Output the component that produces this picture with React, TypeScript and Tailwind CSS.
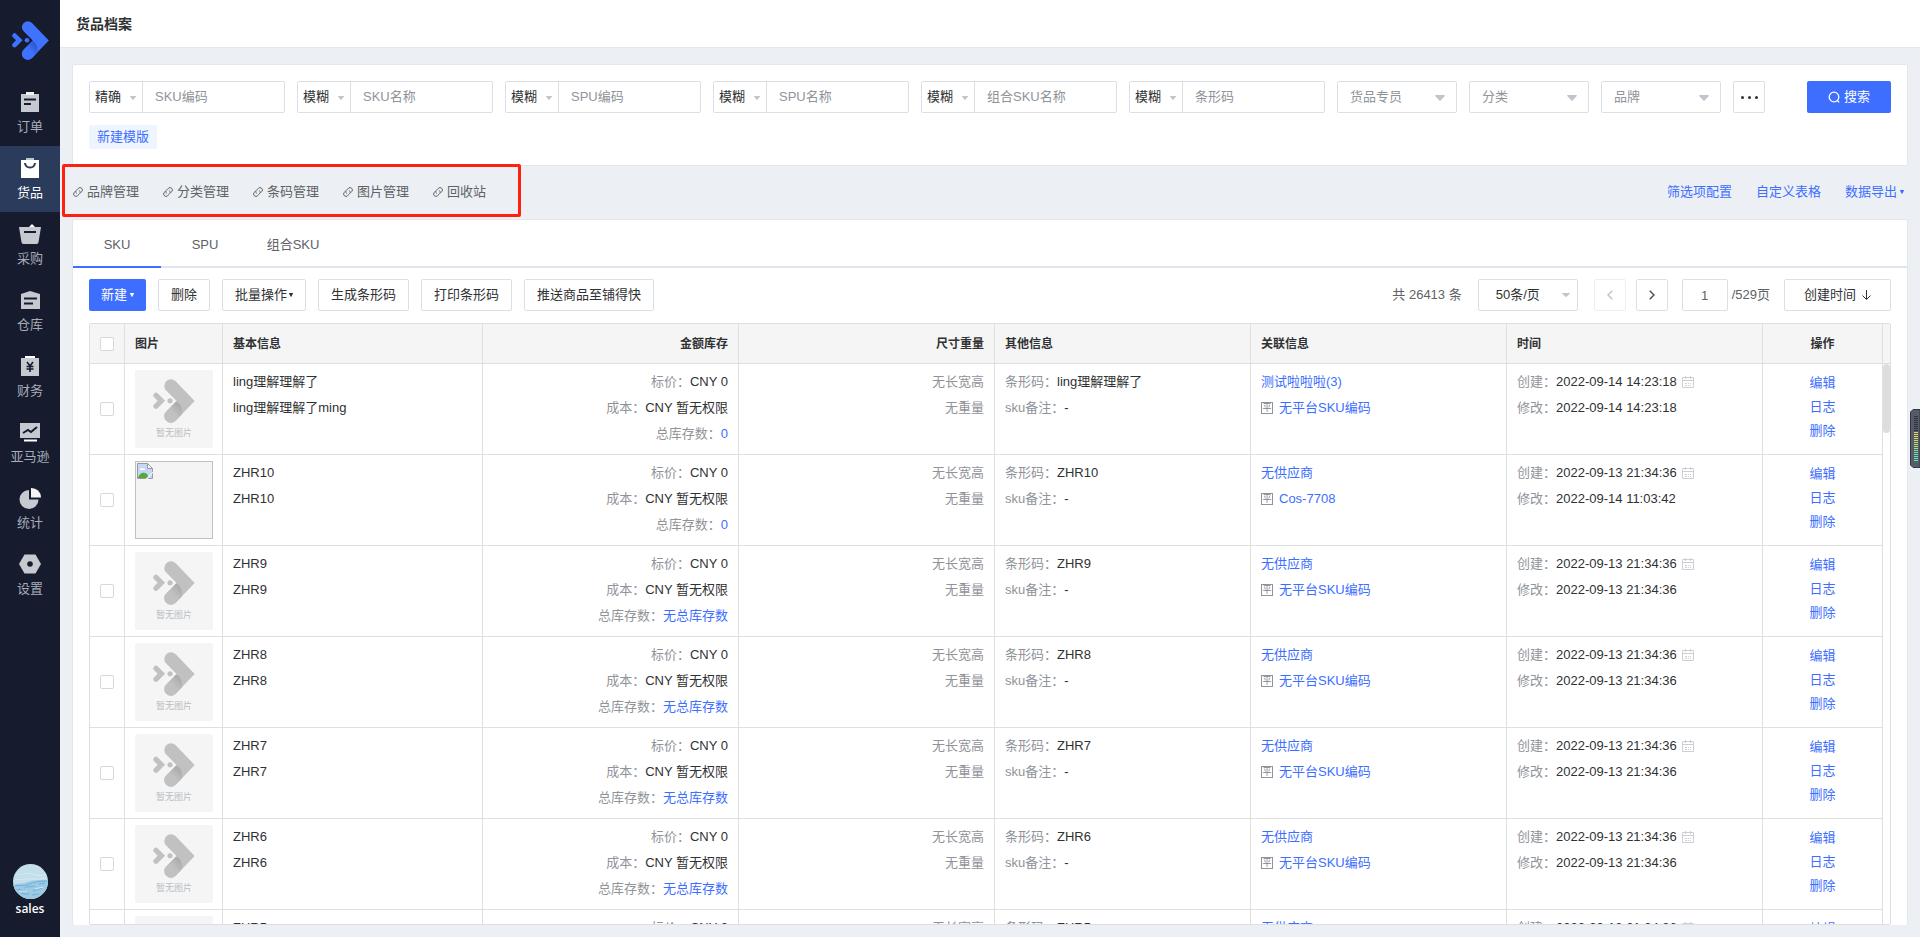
import { useId } from "react";
import type { ReactNode } from "react";

const FONT =
  "font-['Liberation_Sans','Noto_Sans_CJK_SC',sans-serif]";

/* ---------- icons ---------- */

const Caret = ({ className }: { className?: string }) => (
  <svg viewBox="0 0 8 5" preserveAspectRatio="none" fill="currentColor" className={className} aria-hidden>
    <path d="M0.6 0h6.8c.5 0 .7.5.4.8L4.5 4.6a.7.7 0 0 1-1 0L.2.8C-.1.5.1 0 .6 0z" />
  </svg>
);

const Logo = ({
  color,
  shade,
  className,
}: {
  color: string;
  shade: string;
  className?: string;
}) => {
  const id = useId();
  return (
    <svg viewBox="0 0 37 39" className={className} aria-hidden>
      <defs>
        <linearGradient id={id} x1="25" y1="23" x2="18" y2="30" gradientUnits="userSpaceOnUse">
          <stop offset="0" stopColor={shade} />
          <stop offset="1" stopColor={color} />
        </linearGradient>
      </defs>
      <path
        fill={color}
        d="M20 2 36.800 19.500 20 37A5.900 5.900 0 0 1 11.600 28.700L20.800 19.500 11.600 10.300A5.900 5.900 0 0 1 20 2z"
      />
      <path
        fill={`url(#${id})`}
        d="M11.600 28.700 20.300 20C24.500 22 26.400 26 25.200 31.600L20 37A5.900 5.900 0 0 1 11.600 28.700z"
      />
      <circle cx="15" cy="19.3" r="2.3" fill={color} />
      <path
        fill={color}
        d="M4.2 12.9 10.6 19.3 4.2 25.7A2.3 2.3 0 0 1 .9 22.4L4 19.3 .9 16.2A2.3 2.3 0 0 1 4.2 12.9z"
      />
    </svg>
  );
};

const LinkIcon = () => (
  <svg
    viewBox="0 0 10 10"
    className="size-[10px]"
    fill="none"
    stroke="currentColor"
    strokeLinecap="round"
    aria-hidden
  >
    <path d="M3.400 6.200C2.500 5 2.700 4 3.500 3.200L5.400 1.300a2.300 2.300 0 0 1 3.300 3.300L7.600 5.700" />
    <path d="M6.600 3.800C7.500 5 7.300 6 6.500 6.800L4.600 8.700a2.300 2.300 0 0 1-3.300-3.300L2.400 4.300" />
  </svg>
);

const CalendarIcon = () => (
  <svg viewBox="0 0 12 12" className="size-3 text-[#ccd0d4]" fill="none" stroke="currentColor" aria-hidden>
    <path d="M.5 1.500h11v10H.5zM.5 4.500h11M3.500 0v3M8.500 0v3" />
    <path d="M3 7.500h2m1 0h1m1 0h1M3 9.500h2m1 0h1m1 0h1" />
  </svg>
);

const BrokenImageIcon = () => (
  <svg viewBox="0 0 16 16" className="size-4" aria-hidden>
    <path d="M.5.5h10l5 5v10H.5z" fill="#c6d8f5" stroke="#9a9a9a" />
    <path d="M3 6.500c0-1.600 2.400-2.200 3-.8 1.500-.4 2 .4 2 1.300H3z" fill="#fff" />
    <path d="M1 15c1-4 4-6 7-5 2 .6 3 2 3.500 5z" fill="#56a83a" />
    <path d="M8.500 16 16 8.500V10l-5.500 6z" fill="#f4f4f4" />
    <path d="M10.500.5v5h5z" fill="#fff" stroke="#9a9a9a" />
  </svg>
);

const OrderIcon = () => (
  <>
    <path d="M1 2h18v18H1z" />
    <path d="M6 0h8v3H6z" fill="#f1f2f4" />
    <path d="M4 7.500h12M4 12h7" stroke="#161b2e" strokeWidth="2" />
  </>
);

const GoodsIcon = () => (
  <>
    <path d="M1 2h18v18H1z" fill="#fff" />
    <path d="M6 0h8v2H6z" fill="#c3c6cd" />
    <path d="M5 5c.6 6 9.400 6 10 0" fill="none" stroke="#2b3b5b" strokeWidth="2" />
  </>
);

const PurchaseIcon = () => (
  <>
    <path d="M8 4 12 0l4 4z" fill="#fff" />
    <path d="M-1 3h22l-2.500 15.200a2 2 0 0 1-2 1.800h-13a2 2 0 0 1-2-1.800z" />
    <path d="M4 8h12" stroke="#161b2e" strokeWidth="2" />
  </>
);

const WarehouseIcon = () => (
  <>
    <path d="M1 4 10 1l10 3v15H1z" />
    <path d="M4 8.500h13M4 13.500h9" stroke="#161b2e" strokeWidth="2" />
  </>
);

const FinanceIcon = () => (
  <>
    <path d="M1 2h18v18H1z" />
    <path d="M5 0h10v2H5z" fill="#fff" />
    <path
      d="M7 6l3 4 3-4M6.500 10.500h7M6.500 13h7M10 10v6"
      fill="none"
      stroke="#161b2e"
      strokeWidth="1.600"
    />
  </>
);

const AmazonIcon = () => (
  <>
    <path d="M0 1h20v15H0z" />
    <path d="M4 18.500h13" stroke="#fff" strokeWidth="2" />
    <path d="M3 11l5-3 3 2 6-5" fill="none" stroke="#161b2e" strokeWidth="2" />
  </>
);

const StatsIcon = () => (
  <>
    <path d="M9 2a9.500 9.500 0 1 0 9.500 9.500H9z" />
    <path d="M11 0a9.500 9.500 0 0 1 10 9.500H11z" fill="#f4f4f4" />
  </>
);

const SettingsIcon = () => (
  <>
    <path d="M4.500.5h11L21 10l-5.500 9.500h-11L-1 10z" />
    <circle cx="10" cy="10" r="2.800" fill="#161b2e" />
  </>
);

/* ---------- data ---------- */

const menu: { label: string; icon: ReactNode; active?: boolean }[] = [
  { label: "订单", icon: <OrderIcon /> },
  { label: "货品", icon: <GoodsIcon />, active: true },
  { label: "采购", icon: <PurchaseIcon /> },
  { label: "仓库", icon: <WarehouseIcon /> },
  { label: "财务", icon: <FinanceIcon /> },
  { label: "亚马逊", icon: <AmazonIcon /> },
  { label: "统计", icon: <StatsIcon /> },
  { label: "设置", icon: <SettingsIcon /> },
];

const filters = [
  { mode: "精确", label: "SKU编码" },
  { mode: "模糊", label: "SKU名称" },
  { mode: "模糊", label: "SPU编码" },
  { mode: "模糊", label: "SPU名称" },
  { mode: "模糊", label: "组合SKU名称" },
  { mode: "模糊", label: "条形码" },
];

const links = ["品牌管理", "分类管理", "条码管理", "图片管理", "回收站"];

type Row = {
  sku: string;
  name: string;
  barcode: string;
  stock: string;
  supplier: string;
  platform: string;
  created: string;
  updated: string;
  broken?: boolean;
};

const plain = (sku: string): Row => ({
  sku,
  name: sku,
  barcode: sku,
  stock: "无总库存数",
  supplier: "无供应商",
  platform: "无平台SKU编码",
  created: "2022-09-13 21:34:36",
  updated: "2022-09-13 21:34:36",
});

const rows: Row[] = [
  {
    sku: "ling理解理解了",
    name: "ling理解理解了ming",
    barcode: "ling理解理解了",
    stock: "0",
    supplier: "测试啦啦啦(3)",
    platform: "无平台SKU编码",
    created: "2022-09-14 14:23:18",
    updated: "2022-09-14 14:23:18",
  },
  {
    ...plain("ZHR10"),
    stock: "0",
    platform: "Cos-7708",
    updated: "2022-09-14 11:03:42",
    broken: true,
  },
  plain("ZHR9"),
  plain("ZHR8"),
  plain("ZHR7"),
  plain("ZHR6"),
  plain("ZHR5"),
];

/* ---------- small parts ---------- */

const Button = ({ children }: { children: ReactNode }) => (
  <button
    type="button"
    className="flex h-8 items-center gap-0.5 rounded-xs border border-[#dcdfe6] bg-white px-3 whitespace-nowrap text-[#303133]"
  >
    {children}
  </button>
);

const Checkbox = ({ label }: { label: string }) => (
  <input
    type="checkbox"
    aria-label={label}
    className="block size-[14px] appearance-none rounded-xs border border-[#d5d8de] bg-white checked:bg-[#3d6eff]"
  />
);

const Label = ({ children }: { children: ReactNode }) => (
  <span className="text-[#909399]">{children}</span>
);

const Blue = ({ children }: { children: ReactNode }) => (
  <a href="#" className="text-[#3d6eff]">
    {children}
  </a>
);

const Th = ({ children, className = "" }: { children?: ReactNode; className?: string }) => (
  <th
    className={`border-r border-b border-[#dfdfdf] bg-[#f5f5f5] px-[10px] text-xs font-bold text-[#303133] ${className}`}
  >
    {children}
  </th>
);

const Td = ({ children, className = "" }: { children?: ReactNode; className?: string }) => (
  <td className={`border-r border-b border-[#dfdfdf] px-[10px] pt-[5px] align-top leading-[26px] ${className}`}>
    {children}
  </td>
);

/* ---------- sections ---------- */

const Sidebar = () => (
  <aside className="flex w-[60px] shrink-0 flex-col bg-[#161b2e]">
    <div className="flex h-20 items-center justify-center">
      <Logo color="#3f73ff" shade="#2c50c4" className="h-[39px] w-[37px]" />
    </div>
    <nav>
      {menu.map(({ label, icon, active }) => (
        <a
          key={label}
          href="#"
          className={
            active
              ? "flex h-[66px] flex-col items-center bg-[#2b3b5b] pt-3 text-white"
              : "flex h-[66px] flex-col items-center pt-3 text-[#a6acb9]"
          }
        >
          <svg viewBox="0 0 20 20" className="size-5 overflow-visible" fill="#c6c9d0" aria-hidden>
            {icon}
          </svg>
          <span className="mt-[3px] text-[13px] leading-6">{label}</span>
        </a>
      ))}
    </nav>
    <div className="mt-auto flex flex-col items-center pb-[18px]">
      <svg viewBox="0 0 35 35" className="size-[35px]" role="img" aria-label="avatar">
        <defs>
          <clipPath id="avatar">
            <circle cx="17.5" cy="17.5" r="17.5" />
          </clipPath>
        </defs>
        <g clipPath="url(#avatar)">
          <path d="M0 0h35v35H0z" fill="#c3dfea" />
          <path d="M0 21c6-2 10-1 15-3s12-2 20-2v19H0z" fill="#9ccae4" />
          <path
            d="M2 22c5-2 8 1 12-1s10-4 20-4M4 26c3-2 5 2 8 0M16 23l6-1M20 27c3-2 6-1 9-3M8 30c3-1 5 1 8 0M19 31l7-1M12 24l4-2M26 20l6-1"
            fill="none"
            stroke="#6fafda"
          />
          <path
            d="M3 10c6 2 10-2 16 0s8 2 14 0M2 15c8 2 12-1 18 0s8-1 13-1M6 28c3-2 5 0 8-1M22 25l8-2"
            fill="none"
            stroke="#d4e9f0"
          />
        </g>
      </svg>
      <span className="font-['Open_Sans',sans-serif] text-xs leading-5 font-semibold text-white">sales</span>
    </div>
  </aside>
);

const FilterPanel = () => (
  <form className="flex flex-col items-start gap-3 rounded-xs border border-[#e4e7eb] bg-white p-4">
    <div className="flex w-full items-start gap-3">
      {filters.map(({ mode, label }) => (
        <div key={label} className="flex h-8 w-[196px] min-w-0 rounded-xs border border-[#dcdfe6]">
          <div className="relative w-[53px] shrink-0 border-r border-[#dcdfe6]">
            <select
              aria-label={`${label}匹配方式`}
              className="h-full w-full appearance-none pl-[5px] text-[#303133]"
            >
              <option>{mode}</option>
            </select>
            <Caret className="pointer-events-none absolute top-[14px] right-[6px] h-1 w-[6px] text-[#c0c4cc]" />
          </div>
          <input
            type="text"
            aria-label={label}
            placeholder={label}
            className="min-w-0 flex-1 px-3 placeholder:text-[#909399]"
          />
        </div>
      ))}
      {["货品专员", "分类", "品牌"].map((label) => (
        <div key={label} className="relative h-8 w-[120px] min-w-0">
          <select
            aria-label={label}
            className="h-full w-full appearance-none rounded-xs border border-[#dcdfe6] pl-3 text-[#909399]"
          >
            <option>{label}</option>
          </select>
          <Caret className="pointer-events-none absolute top-[14px] right-3 h-[6px] w-[10px] text-[#c0c4cc]" />
        </div>
      ))}
      <button
        type="button"
        aria-label="更多筛选"
        className="flex size-8 shrink-0 items-center justify-center gap-1 rounded-xs border border-[#dcdfe6]"
      >
        <i className="size-[3px] rounded-full bg-[#303133]" />
        <i className="size-[3px] rounded-full bg-[#303133]" />
        <i className="size-[3px] rounded-full bg-[#303133]" />
      </button>
      <button
        type="button"
        className="ml-auto flex h-8 w-[84px] shrink-0 items-center justify-center gap-1 rounded-xs bg-[#3d6eff] text-white"
      >
        <svg viewBox="0 0 12 12" className="size-3" fill="none" stroke="currentColor" strokeWidth="1.300" aria-hidden>
          <circle cx="6" cy="6" r="4.800" />
          <path d="M9 9.200 11.200 11.400" />
        </svg>
        搜索
      </button>
    </div>
    <button type="button" className="h-6 rounded-xs bg-[#eef5ff] px-2 leading-6 text-[#3d6eff]">
      新建模版
    </button>
  </form>
);

const LinkBar = () => (
  <div className="relative flex h-[53px] items-center justify-between pb-0.5">
    <div className="flex gap-6 pl-px">
      {links.map((label) => (
        <a key={label} href="#" className="flex items-center gap-1 text-[#606266]">
          <LinkIcon />
          {label}
        </a>
      ))}
    </div>
    <div className="flex gap-6 pr-1 text-[#3d6eff]">
      <a href="#">筛选项配置</a>
      <a href="#">自定义表格</a>
      <a href="#" className="flex items-center gap-[3px]">
        数据导出
        <Caret className="size-1" />
      </a>
    </div>
    {/* highlight frame */}
    <div className="pointer-events-none absolute -top-[2px] -left-[10px] h-[53px] w-[459px] rounded-xs border-3 border-[#ff2010]" />
  </div>
);

const Toolbar = () => (
  <div className="flex items-center justify-between px-4 pt-[11px] pb-3">
    <div className="flex gap-3">
      <button
        type="button"
        className="flex h-8 items-center gap-[3px] rounded-xs bg-[#3d6eff] px-3 text-white"
      >
        新建
        <Caret className="size-1" />
      </button>
      <Button>删除</Button>
      <Button>
        批量操作
        <Caret className="size-1" />
      </Button>
      <Button>生成条形码</Button>
      <Button>打印条形码</Button>
      <Button>推送商品至铺得快</Button>
    </div>
    <div className="flex items-center text-[#606266]">
      <span>共 26413 条</span>
      <div className="relative ml-4 h-8 w-[100px]">
        <select
          aria-label="每页条数"
          className="h-full w-full appearance-none rounded-xs border border-[#dcdfe6] pl-[17px] text-[#303133]"
        >
          <option>50条/页</option>
        </select>
        <Caret className="pointer-events-none absolute top-[14px] right-2 h-1 w-2 text-[#c0c4cc]" />
      </div>
      <button
        type="button"
        aria-label="上一页"
        disabled
        className="ml-4 flex size-8 items-center justify-center rounded-xs border border-[#ebeef5] text-[#c0c4cc]"
      >
        <svg viewBox="0 0 6 10" className="h-[10px] w-[6px]" fill="none" stroke="currentColor" strokeWidth="1.500">
          <path d="M5.300.8 1 5l4.300 4.200" />
        </svg>
      </button>
      <button
        type="button"
        aria-label="下一页"
        className="ml-[10px] flex size-8 items-center justify-center rounded-xs border border-[#dcdfe6] text-[#505256]"
      >
        <svg viewBox="0 0 6 10" className="h-[10px] w-[6px]" fill="none" stroke="currentColor" strokeWidth="1.500">
          <path d="M.7.8 5 5 .7 9.200" />
        </svg>
      </button>
      <input
        type="text"
        aria-label="页码"
        defaultValue="1"
        className="mr-1 ml-[14px] h-8 w-[46px] rounded-xs border border-[#dcdfe6] text-center"
      />
      <span>/529页</span>
      <button
        type="button"
        className="ml-[14px] flex h-8 w-[107px] items-center justify-center gap-[6px] rounded-xs border border-[#dcdfe6] text-[#303133]"
      >
        创建时间
        <svg viewBox="0 0 9 10" className="h-[10px] w-[9px]" fill="none" stroke="currentColor" aria-hidden>
          <path d="M4.500 0v9.200M.5 5.500l4 4 4-4" />
        </svg>
      </button>
    </div>
  </div>
);

const GoodsTable = () => (
  <div className="mx-4 flex min-h-0 flex-1 overflow-hidden rounded-xs border border-[#dfdfdf]">
    <div className="min-w-0 flex-1 overflow-hidden">
      <table className="w-full table-fixed border-separate border-spacing-0">
        <colgroup>
          <col className="w-[35px]" />
          <col className="w-[98px]" />
          <col className="w-[260px]" />
          <col />
          <col />
          <col />
          <col />
          <col />
          <col className="w-[120px]" />
        </colgroup>
        <thead>
          <tr className="h-10 text-left">
            <Th>
              <Checkbox label="全选" />
            </Th>
            <Th>图片</Th>
            <Th>基本信息</Th>
            <Th className="text-right">金额库存</Th>
            <Th className="text-right">尺寸重量</Th>
            <Th>其他信息</Th>
            <Th>关联信息</Th>
            <Th>时间</Th>
            <Th className="text-center">操作</Th>
          </tr>
        </thead>
        <tbody className="text-[#303133]">
          {rows.map((row) => (
            <tr key={row.sku} className="h-[91px]">
              <td className="border-r border-b border-[#dfdfdf] px-[10px] align-middle">
                <Checkbox label={row.sku} />
              </td>
              <td className="border-r border-b border-[#dfdfdf] px-[10px]">
                {row.broken ? (
                  <div className="size-[78px] border border-[#c0c0c0] bg-[#f4f4f4] p-px">
                    <BrokenImageIcon />
                  </div>
                ) : (
                  <div className="flex size-[78px] flex-col items-center gap-1 rounded-xs bg-[#f5f5f5] pt-[9px] text-[9px] leading-3 text-[#b9bdc3]">
                    <Logo color="#c1c1c1" shade="#a8a8a8" className="h-[44px] w-[42px]" />
                    暂无图片
                  </div>
                )}
              </td>
              <Td>
                <p>{row.sku}</p>
                <p>{row.name}</p>
              </Td>
              <Td className="text-right">
                <p>
                  <Label>标价：</Label>CNY 0
                </p>
                <p>
                  <Label>成本：</Label>CNY 暂无权限
                </p>
                <p>
                  <Label>总库存数：</Label>
                  <Blue>{row.stock}</Blue>
                </p>
              </Td>
              <Td className="text-right text-[#909399]">
                <p>无长宽高</p>
                <p>无重量</p>
              </Td>
              <Td>
                <p>
                  <Label>条形码：</Label>
                  {row.barcode}
                </p>
                <p>
                  <Label>sku备注：</Label>-
                </p>
              </Td>
              <Td>
                <p>
                  <Blue>{row.supplier}</Blue>
                </p>
                <p className="flex items-center gap-[6px]">
                  <span className="flex size-3 items-center justify-center border border-[#909399] text-[9px] leading-none text-[#808389]">
                    平
                  </span>
                  <Blue>{row.platform}</Blue>
                </p>
              </Td>
              <Td>
                <p className="flex items-center">
                  <Label>创建：</Label>
                  <span className="mr-[5px]">{row.created}</span>
                  <CalendarIcon />
                </p>
                <p>
                  <Label>修改：</Label>
                  {row.updated}
                </p>
              </Td>
              <td className="border-r border-b border-[#dfdfdf] pt-[7px] text-center align-top leading-6 text-[#3d6eff]">
                {["编辑", "日志", "删除"].map((action) => (
                  <a key={action} href="#" className="block">
                    {action}
                  </a>
                ))}
              </td>
            </tr>
          ))}
        </tbody>
      </table>
    </div>
    <div className="w-[7px] shrink-0">
      <div className="h-10 border-b border-[#dfdfdf] bg-[#f5f5f5]" />
      <div className="h-[69px] rounded-full bg-[#dddddd]" />
    </div>
  </div>
);

const LevelMeter = () => (
  <svg viewBox="0 0 10 59" className="fixed top-[409px] right-0 h-[59px] w-[10px]" aria-hidden>
    <path d="M10 .5H3L.5 3v53L3 58.500h7z" fill="#565b6b" stroke="#343843" />
    {Array.from({ length: 23 }, (_, i) => (
      <path
        key={i}
        d={`M4 ${7.5 + i * 2}h4`}
        stroke={i < 8 ? "#2e323d" : i < 12 ? "#e8d84e" : i < 17 ? "#b4e56a" : "#62e8b4"}
      />
    ))}
  </svg>
);

export default function App() {
  return (
    <div className={`flex h-screen overflow-hidden bg-[#ecf0f5] text-[13px] leading-5 ${FONT}`}>
      <Sidebar />
      <div className="flex min-w-0 flex-1 flex-col">
        <header className="flex h-12 shrink-0 items-center border-b border-[#e4e7eb] bg-white px-4">
          <h1 className="text-sm font-bold text-[#303133]">货品档案</h1>
        </header>
        <main className="flex min-h-0 flex-1 flex-col px-3 pt-4 pb-3">
          <FilterPanel />
          <LinkBar />
          <section className="flex min-h-0 flex-1 flex-col rounded-xs border border-b-0 border-[#e4e7eb] bg-white">
            <div role="tablist" className="flex h-12 shrink-0 border-b-2 border-[#dfe4ed] text-[#606266]">
              <button type="button" role="tab" aria-selected className="-mb-[2px] w-[88px] border-b-2 border-[#3d6eff] pt-1">
                SKU
              </button>
              <button type="button" role="tab" className="w-[88px] pt-1">
                SPU
              </button>
              <button type="button" role="tab" className="w-[88px] pt-1">
                组合SKU
              </button>
            </div>
            <Toolbar />
            <GoodsTable />
          </section>
        </main>
      </div>
      <LevelMeter />
    </div>
  );
}
